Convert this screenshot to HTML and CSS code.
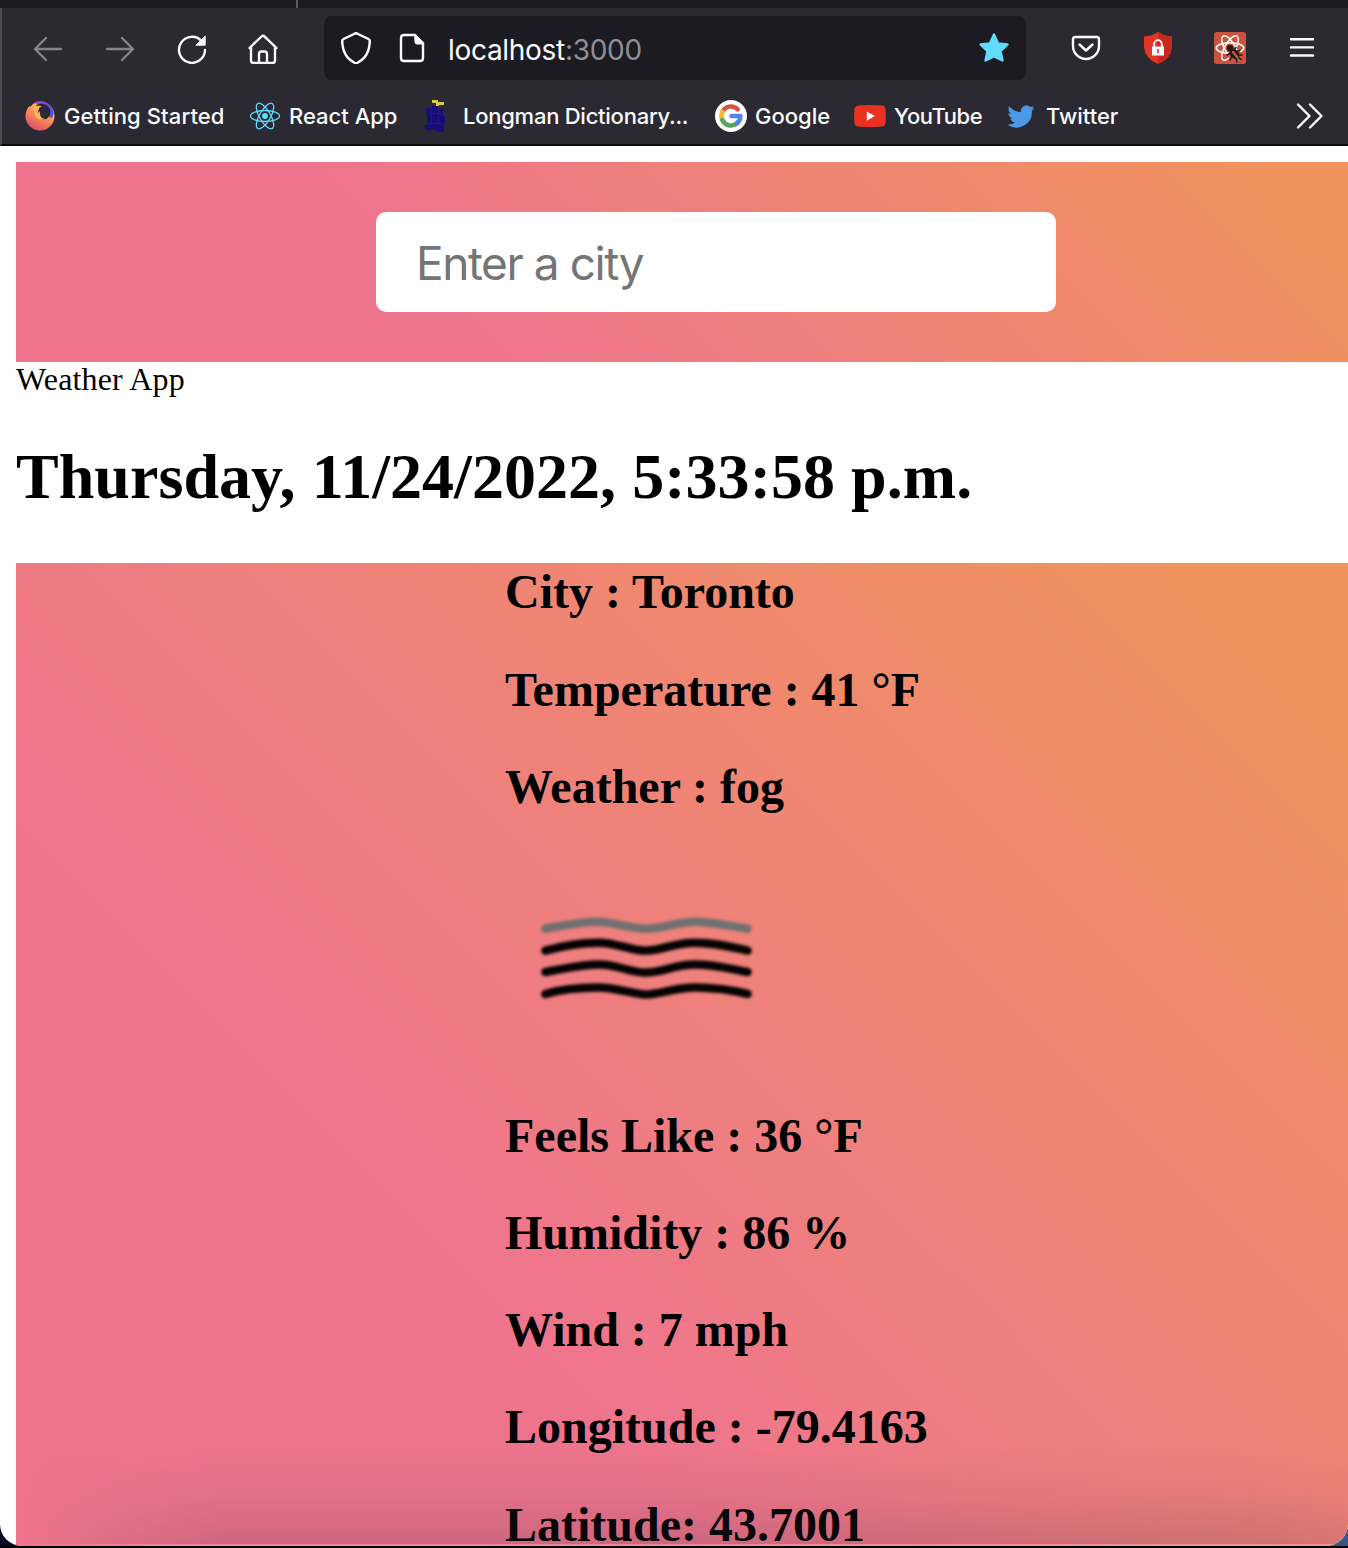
FILE: index.html
```
<!DOCTYPE html>
<html lang="en">
<head>
<meta charset="utf-8">
<title>Weather App</title>
<link rel="stylesheet" href="styles.css">
</head>
<body>
<div class="window">
  <div class="tabs"><span class="tab-divider"></span></div>
  <header class="chrome">
    <nav class="toolbar">
      <svg class="icon dim" viewBox="0 0 32 32"><path d="M29 17H3M14 6L3 17l11 11"/></svg>
      <svg class="icon dim" viewBox="0 0 32 32"><path d="M3 17h26M18 6l11 11-11 11"/></svg>
      <svg class="icon" viewBox="0 0 32 32"><path d="M29 18A13 13 0 1 1 26 9.500"/><path class="solid" d="M29.200 4.500v8.700h-9z"/></svg>
      <svg class="icon" viewBox="0 0 32 32"><path d="M1.500 16L13.500 4.500q1.500-1.400 3 0L28.500 16M3 15v13.500q0 2.500 2.500 2.500h19q2.500 0 2.500-2.500V15M11 31V22q0-2.500 2.500-2.500h3q2.500 0 2.500 2.500v9"/></svg>
      <div class="url">
        <svg class="icon" viewBox="0 0 32 32"><path d="M16 1.200Q17 1.200 18 2L28.500 7Q30 7.700 29.800 9.500C29.500 21 24 27.500 17.500 30.800Q16 31.500 14.500 30.800C8 27.500 2.500 21 2.200 9.500Q2 7.700 3.500 7L14 2Q15 1.200 16 1.200z"/></svg>
        <svg class="icon" viewBox="0 0 32 32"><path d="M19 3H8Q5 3 5 6V26Q5 29 8 29H24Q27 29 27 26V11"/><path class="solid" d="M19 3h1l7 7v2h-6q-2 0-2-2z"/></svg>
        <span class="address">localhost<span class="port">:3000</span></span>
        <svg class="icon star" viewBox="0 0 32 32"><path d="M16 2.500l4 9 9.500 1-7 6.700 2 9.300L16 24.500 7.500 28.500l2-9.300-7-6.700 9.500-1z"/></svg>
      </div>
      <svg class="icon" viewBox="0 0 32 32"><path d="M5.500 5h21Q29 5 29 7.500V14A13 13 0 0 1 3 14V7.500Q3 5 5.500 5zM9.500 12.500L16 18.500l6.500-6"/></svg>
      <svg class="icon filled" viewBox="0 0 32 32"><path fill="#e33525" d="M16 0Q22 4 30 4.500V15Q29 27 16 32 3 27 2 15V4.500Q10 4 16 0z"/><path fill="#c92a20" d="M16 0Q22 4 30 4.500V15Q29 27 16 32z"/><path d="M12.200 15v-3a3.800 3.800 0 0 1 7.600 0v3" fill="none" stroke="#fff" stroke-width="1.800"/><path fill="#fff" d="M10 14.500h12v9H10z"/><path fill="#d42d22" d="M15.200 17h1.600v4h-1.600z"/></svg>
      <svg class="icon filled" viewBox="0 0 32 32"><rect width="32" height="32" rx="2.500" fill="#cb523f"/><g fill="none" stroke="#fff" stroke-width="1.500"><ellipse cx="16" cy="16" rx="13.800" ry="5.300"/><ellipse cx="16" cy="16" rx="13.800" ry="5.300" transform="rotate(60 16 16)"/><ellipse cx="16" cy="16" rx="13.800" ry="5.300" transform="rotate(120 16 16)"/></g><path fill="#cb523f" d="M15 20l8-2 4 3v6l-7 3-7-6z"/><g fill="#1f1b1b"><circle cx="16" cy="16" r="3.200"/><ellipse cx="20.500" cy="22" rx="4.200" ry="6" transform="rotate(-40 20.500 22)"/></g><path fill="none" stroke="#1f1b1b" stroke-width="1.500" d="M20 18l2-2.500M22 20l4-1.500M24 23h4M17 21l-4 2M18 24l-2 4M22 26l1 4M24 25l3 2.500"/><path d="M19 20l4.500 5.500" stroke="#cb523f"/></svg>
      <svg class="icon" viewBox="0 0 32 32"><path d="M5 7.200h22M5 15.400h22M5 23.500h22"/></svg>
    </nav>
    <div class="bookmarks">
      <a class="bookmark"><svg class="icon filled" viewBox="0 0 32 32"><defs><linearGradient id="fox" x1=".8" y1="0" x2=".3" y2="1"><stop offset="0" stop-color="#ffd567"/><stop offset=".45" stop-color="#f99a58"/><stop offset="1" stop-color="#e0486a"/></linearGradient><linearGradient id="tail" x1="0" x2="1" y2=".6"><stop offset="0" stop-color="#a03bd0"/><stop offset="1" stop-color="#5a50f0"/></linearGradient></defs><circle cx="16" cy="16" r="14.500" fill="url(#fox)"/><path fill="#2b2a33" d="M0 0h13L8.500 4.500 6 7 5 4 2 8z"/><path fill="url(#tail)" d="M9 3.500Q15-.5 22 2.500 30 6 29.500 14 29 18 26 18L22 7Q17 3 9 3.500z"/><path fill="#2b2a33" d="M12 5Q19 2 24 6 28 11 25.500 16 22 21 16.500 19 12.500 17 14 12L15 9z"/><path fill="#f9b45c" d="M10 7q3-2 8-1-3 1-4 4-1 2 0 3l2-2q-1 7 5 8-6 2-9-2-3-5-2-10z"/></svg>Getting Started</a>
      <a class="bookmark"><svg class="icon atom" viewBox="0 0 32 32"><ellipse cx="16" cy="16" rx="14.500" ry="5.500"/><ellipse cx="16" cy="16" rx="14.500" ry="5.500" transform="rotate(60 16 16)"/><ellipse cx="16" cy="16" rx="14.500" ry="5.500" transform="rotate(120 16 16)"/><circle cx="16" cy="16" r="2.300"/></svg>React App</a>
      <a class="bookmark tight"><svg class="icon filled" viewBox="0 0 32 32"><path fill="#170c78" d="M9 6h6v3h5v7h2v8h-1v8h-8v-2H2v-5h2V14H3V8h6z"/><path fill="#d8cc45" d="M9 0h6v2h6v3h-5v1h-3V3H9z"/><path d="M4 13.500h17M3 23.500h18M8.500 8v16M15.500 8v16" stroke="#241c68" stroke-width="1"/></svg>Longman Dictionary...</a>
      <a class="bookmark"><svg class="icon filled" viewBox="0 0 32 32"><circle cx="16" cy="16" r="16" fill="#fff"/><g fill="none" stroke-width="4.500"><path stroke="#d85040" d="M22.700 9.300A9.500 9.500 0 0 0 7.300 12"/><path stroke="#f2b93b" d="M7.300 12a9.500 9.500 0 0 0 0 8"/><path stroke="#58a55c" d="M7.300 20a9.500 9.500 0 0 0 14.700 3.300"/><path stroke="#5383ec" d="M22 23.300A9.500 9.500 0 0 0 25.400 16H16.500"/></g></svg>Google</a>
      <a class="bookmark tighter"><svg class="icon filled" viewBox="0 0 32 32"><path fill="#e93223" d="M4 5.500q12-1 24 0 3 .3 3.500 3.500.8 7 0 14-.5 3-3.500 3.500-12 1-24 0Q1 26 .5 23q-.8-7 0-14Q1 6 4 5.500z"/><path fill="#fff" d="M12.800 11.500v9.200l8-4.600z"/></svg>YouTube</a>
      <a class="bookmark"><svg class="icon filled" viewBox="0 0 24 24"><path fill="#4b99e9" d="M21.500 5.900c-.7.300-1.500.5-2.400.6.900-.5 1.500-1.300 1.800-2.200-.8.500-1.700.8-2.600 1a4.100 4.100 0 0 0-7 3.700A11.600 11.600 0 0 1 2.400 4.700a4.100 4.100 0 0 0 1.300 5.500c-.7 0-1.300-.2-1.900-.5v.1c0 2 1.400 3.600 3.300 4-.6.200-1.200.2-1.900.1.500 1.600 2 2.800 3.800 2.800A8.200 8.200 0 0 1 1 18.400a11.600 11.600 0 0 0 18.400-10.300c.8-.6 1.500-1.300 2.100-2.200z"/></svg>Twitter</a>
      <svg class="icon more" viewBox="0 0 32 32"><path d="M6 4.500L17.500 16 6 27.500M18 4.500L29.500 16 18 27.500"/></svg>
    </div>
  </header>
  <main class="page">
    <div class="search"><input class="city" type="text" placeholder="Enter a city"></div>
    <div class="app-name">Weather App</div>
    <h1 class="date">Thursday, 11/24/2022, 5:33:58 p.m.</h1>
    <section class="weather">
      <div class="details">
        <h2>City : Toronto</h2>
        <h2>Temperature : 41 °F</h2>
        <h2>Weather : fog</h2>
        <svg class="fog" viewBox="0 0 282 252"><g fill="none" stroke="#050303" stroke-width="8.500" stroke-linecap="round"><path stroke="#707070" d="M40 73C62 69 76 66 92 66S124 73 141 73 172 66 190 66 222 70 243 73"/><path d="M40 95C58 90 74 87 93 87S125 95 141 95 170 87 190 87 225 91 243 95"/><path d="M40 116.500C60 113 76 109 94 109S125 117 141 117 170 109 190 109 224 113 243 116.500"/><path d="M40 138.500C58 133 74 132 93 132S128 139 141 139 170 132 190 132 225 134 243 138.500"/></g></svg>
        <h2>Feels Like : 36 °F</h2>
        <h2>Humidity : 86 %</h2>
        <h2>Wind : 7 mph</h2>
        <h2>Longitude : -79.4163</h2>
        <h2>Latitude: 43.7001</h2>
      </div>
    </section>
  </main>
  <div class="bottom-shade"></div>
</div>
</body>
</html>
```
FILE: styles.css
```
* { box-sizing: border-box; }
body {
  margin: 0;
  height: 1548px;
  overflow: hidden;
  background: linear-gradient(#000, #000) 0 1546px / 100% 2px no-repeat, linear-gradient(90deg, #080620 50%, #355788 50%);
  font-family: "Liberation Serif", serif;
  color: #000;
}
.window {
  position: relative;
  height: 1546px;
  overflow: hidden;
  border-radius: 0 0 22px 22px;
  background: #fff;
}
.tabs { height: 8px; padding-left: 296px; background: #1c1b22; }
.tab-divider { display: block; width: 2px; height: 8px; background: #5b5b60; }
.chrome {
  height: 138px;
  background: #2b2a33;
  border-bottom: 2px solid #0c0c0e;
  border-left: 2px solid #4c4b53;
  font-family: Inter, sans-serif;
  color: #fbfbfe;
}
.toolbar { display: flex; align-items: center; gap: 40px; height: 80px; padding: 0 30px; }
.icon {
  flex: none;
  width: 32px;
  height: 32px;
  fill: none;
  stroke: #fbfbfe;
  stroke-width: 2.400;
  stroke-linecap: round;
  stroke-linejoin: round;
}
.icon .solid { fill: #fbfbfe; stroke-width: 1; }
.dim { stroke: #84838a; }
.filled { stroke: none; }
.star { fill: #61dafb; stroke: #61dafb; margin-left: auto; }
.atom { stroke: #61dafb; stroke-width: 1.300; }
.atom circle { fill: #61dafb; }
.url {
  display: flex;
  align-items: center;
  flex: 1;
  gap: 24px;
  height: 64px;
  margin: 0 4px;
  padding: 0 16px;
  border-radius: 8px;
  background: #1c1b22;
}
.address { margin-left: -4px; padding-top: 3px; font-size: 28px; letter-spacing: -0.3px; }
.port { color: #8f8f94; }
.bookmarks {
  display: grid;
  grid-template-columns: 225px 174px 292px 139px 152px 286px 32px;
  align-items: center;
  height: 56px;
  padding-left: 22px;
}
.bookmark { display: flex; align-items: center; gap: 8px; font-size: 22px; font-weight: 500; line-height: 34px; white-space: nowrap; }
.bookmark:first-child { letter-spacing: 0.1px; }
.bookmark.tight { letter-spacing: -0.25px; }
.bookmark.tighter { letter-spacing: -0.45px; }
.page { width: 1416px; padding: 16px 0 0 16px; }
.search {
  display: flex;
  align-items: center;
  justify-content: center;
  height: 200px;
  background: linear-gradient(45deg, #ee748e 30%, #f0945d 90%);
}
.city {
  width: 680px;
  height: 100px;
  padding: 2px 40px 0;
  border: 0;
  border-radius: 10px;
  background: #fff;
  font: 46px Inter, sans-serif;
  letter-spacing: -1.45px;
}
.city::placeholder { color: #757575; opacity: 1; }
.app-name { height: 37px; font-size: 32px; line-height: 34px; letter-spacing: 0.15px; }
.date { margin: 41px 0 49px; font-size: 64px; line-height: 74px; letter-spacing: 0.04px; }
.weather {
  display: flex;
  justify-content: center;
  height: 1020px;
  background: linear-gradient(45deg, #ee748e 30%, #f0945d 91%);
}
.details { width: 422px; }
.details h2 { margin: 0 0 40px; font-size: 48px; line-height: 57.500px; white-space: nowrap; }
.fog { display: block; width: 282px; height: 251px; filter: blur(1.700px); }
.fog + h2 ~ h2 { margin-bottom: 39.700px; }
.bottom-shade {
  position: absolute;
  left: 0;
  right: 0;
  bottom: 0;
  height: 100px;
  background: linear-gradient(to top, rgba(60, 45, 60, .18), rgba(60, 45, 60, .06) 50%, transparent);
  mask-image: linear-gradient(90deg, transparent 20px, #000 220px, #000 1250px, rgba(0, 0, 0, .7));
  border-bottom: 2px solid rgba(255, 255, 255, .15);
}
```
